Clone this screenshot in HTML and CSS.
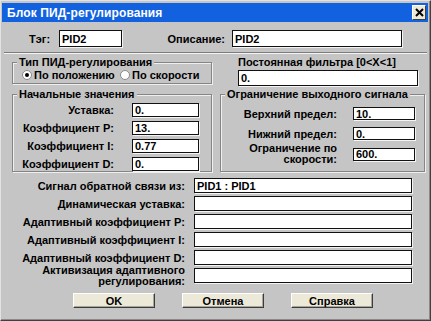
FILE: index.html
```html
<!DOCTYPE html>
<html lang="ru">
<head>
<meta charset="utf-8">
<title>Блок ПИД-регулирования</title>
<link rel="stylesheet" href="styles.css">
</head>
<body>
<div class="window">
  <div class="titlebar">
    <span class="title">Блок ПИД-регулирования</span>
    <span class="close"><svg width="9" height="9" viewBox="0 0 9 9"><path d="M1 1 L8 8 M8 1 L1 8" stroke="#000" stroke-width="2"/></svg></span>
  </div>
  <div class="body">
    <div class="row-tag">
      <label class="lbl-tag">Тэг:</label>
      <input class="field w-tag" value="PID2">
      <label class="lbl-desc">Описание:</label>
      <input class="field w-desc" value="PID2">
    </div>
    <div class="sep"></div>
    <div class="cols">
      <div class="col-left">
        <fieldset class="group g-type">
          <legend>Тип ПИД-регулирования</legend>
          <div class="radios">
            <span class="radio r1"><span class="dot on"></span>По положению</span>
            <span class="radio"><span class="dot"></span>По скорости</span>
          </div>
        </fieldset>
        <fieldset class="group g-init">
          <legend>Начальные значения</legend>
          <div class="init-rows">
            <div class="frow"><span class="flabel">Уставка:</span><input class="field w-init" value="0."></div>
            <div class="frow"><span class="flabel">Коэффициент P:</span><input class="field w-init" value="13."></div>
            <div class="frow"><span class="flabel">Коэффициент I:</span><input class="field w-init" value="0.77"></div>
            <div class="frow"><span class="flabel">Коэффициент D:</span><input class="field w-init" value="0."></div>
          </div>
        </fieldset>
      </div>
      <div class="col-right">
        <div class="filter-label">Постоянная фильтра [0&lt;X&lt;1]</div>
        <input class="field w-filter" value="0.">
        <fieldset class="group g-limit">
          <legend>Ограничение выходного сигнала</legend>
          <div class="limit-rows">
            <div class="lrow"><span class="llabel">Верхний предел:</span><input class="field w-lim" value="10."></div>
            <div class="lrow r2"><span class="llabel">Нижний предел:</span><input class="field w-lim" value="0."></div>
            <div class="lrow r3"><span class="llabel two">Ограничение по<br>скорости:</span><input class="field w-lim" value="600."></div>
          </div>
        </fieldset>
      </div>
    </div>
    <div class="bottom">
      <div class="brow"><span class="blabel">Сигнал обратной связи из:</span><input class="field w-b" value="PID1 : PID1"></div>
      <div class="brow"><span class="blabel">Динамическая уставка:</span><input class="field w-b" value=""></div>
      <div class="brow"><span class="blabel">Адаптивный коэффициент P:</span><input class="field w-b" value=""></div>
      <div class="brow"><span class="blabel">Адаптивный коэффициент I:</span><input class="field w-b" value=""></div>
      <div class="brow"><span class="blabel">Адаптивный коэффициент D:</span><input class="field w-b" value=""></div>
      <div class="brow last"><span class="blabel two">Активизация адаптивного<br>регулирования:</span><input class="field w-b" value=""></div>
    </div>
    <div class="buttons">
      <button class="btn">OK</button>
      <button class="btn">Отмена</button>
      <button class="btn">Справка</button>
    </div>
  </div>
</div>
</body>
</html>
```
FILE: styles.css
```css
html, body {
  margin: 0;
  padding: 0;
  background: #c5c5c5;
}
body {
  font-family: "Liberation Sans", Arial, sans-serif;
  font-size: 11px;
  font-weight: bold;
  color: #000;
}
.window {
  width: 431px;
  height: 321px;
  box-sizing: border-box;
  background: #c5c5c5;
  border: 1px solid;
  border-color: #e2e2e2 #404040 #404040 #e2e2e2;
  box-shadow: inset -1px -1px 0 #8a8a8a;
  padding: 2px 2px 1px 1px;
  overflow: hidden;
}
.titlebar {
  height: 19px;
  background: #1262e0;
  display: flex;
  align-items: center;
  justify-content: space-between;
  padding: 0 2px 0 5px;
  color: #fff;
}
.title {
  font-size: 12px;
  font-weight: bold;
  letter-spacing: 0.1px;
}
.close {
  width: 14px;
  height: 15px;
  box-sizing: border-box;
  background: #ece9d8;
  border: 1px solid;
  border-color: #fff #404040 #404040 #fff;
  display: flex;
  align-items: center;
  justify-content: center;
}
.close svg { display: block; }

.body {
  display: flex;
  flex-direction: column;
}
.field {
  box-sizing: border-box;
  height: 14px;
  margin: 0;
  padding: 0 2px;
  border: 1px solid #111;
  box-shadow: 1px 1px 0 #f4f4f4;
  background: #fff;
  font-family: "Liberation Sans", Arial, sans-serif;
  font-size: 11px;
  font-weight: bold;
  color: #000;
  outline: none;
}

.row-tag {
  display: flex;
  align-items: center;
  margin-top: 8px;
  padding-left: 27px;
  height: 17px;
}
.row-tag .field { height: 17px; }
.lbl-tag { width: 30px; }
.w-tag { width: 63px; }
.lbl-desc {
  width: 110px;
  text-align: right;
  padding-right: 7px;
  box-sizing: border-box;
}
.w-desc { width: 170px; }

.sep {
  margin: 5px 1px 0 2px;
  border-top: 1px solid #7c7c7c;
  border-bottom: 1px solid #f4f4f4;
}

.cols {
  display: flex;
  gap: 8px;
  padding-left: 10px;
}
.col-left {
  width: 200px;
  display: flex;
  flex-direction: column;
}
.col-right {
  width: 205px;
  display: flex;
  flex-direction: column;
}

.group {
  margin: 0;
  padding: 0;
  min-width: 0;
  border: 1px solid #858585;
  box-shadow: inset 1px 1px 0 #efefef, 1px 1px 0 #efefef;
}
.group legend {
  margin-left: 4px;
  padding: 0 2px;
  line-height: 13px;
  background: #c5c5c5;
}

.g-type { margin-top: 2px; }
.radios {
  display: flex;
  align-items: center;
  height: 12px;
  padding: 0 0 2px 9px;
}
.radio {
  display: flex;
  align-items: center;
  gap: 2px;
}
.r1 { width: 98px; }
.dot {
  width: 10px;
  height: 10px;
  box-sizing: border-box;
  border-radius: 50%;
  background: #fff;
  border: 1px solid #8a8a8a;
  position: relative;
  flex: none;
}
.dot.on::after {
  content: "";
  position: absolute;
  left: 2px;
  top: 2px;
  width: 4px;
  height: 4px;
  border-radius: 50%;
  background: #000;
}

.g-init { margin-top: 4px; }
.init-rows {
  display: flex;
  flex-direction: column;
  gap: 4px;
  padding-top: 2px;
}
.frow {
  display: flex;
  align-items: center;
  gap: 18px;
}
.flabel {
  width: 101px;
  text-align: right;
}
.w-init { width: 67px; }

.filter-label {
  margin-top: 2px;
  padding-left: 18px;
  line-height: 13px;
}
.w-filter {
  margin: 1px 0 0 18px;
  width: 180px;
  height: 16px;
}
.g-limit { margin-top: 2px; }
.limit-rows {
  display: flex;
  flex-direction: column;
  padding: 6px 0 6px 0;
}
.lrow {
  display: flex;
  align-items: center;
  gap: 16px;
}
.lrow .field { height: 13px; }
.lrow.r2 { margin-top: 7px; }
.lrow.r3 { margin-top: 3px; }
.llabel {
  width: 116px;
  text-align: right;
}
.two { line-height: 11px; }
.w-lim { width: 62px; }

.bottom {
  display: flex;
  flex-direction: column;
  margin-top: 6px;
}
.brow {
  display: flex;
  align-items: center;
  gap: 9px;
  margin-top: 3px;
}
.brow:first-child { margin-top: 0; }
.brow.last { margin-top: -0.5px; }
.brow .field { height: 15px; }
.blabel {
  width: 183px;
  text-align: right;
}
.w-b { width: 218px; }

.buttons {
  display: flex;
  gap: 27px;
  padding-left: 71px;
  margin-top: 6.5px;
}
.btn {
  width: 82px;
  height: 15px;
  box-sizing: border-box;
  margin: 0;
  padding: 0;
  background: #ece9d8;
  border: 1px solid;
  border-color: #fff #3c3c3c #3c3c3c #fff;
  box-shadow: inset -1px -1px 0 #a8a59a;
  font-family: "Liberation Sans", Arial, sans-serif;
  font-size: 11px;
  font-weight: bold;
  color: #000;
  line-height: 12px;
}
```
